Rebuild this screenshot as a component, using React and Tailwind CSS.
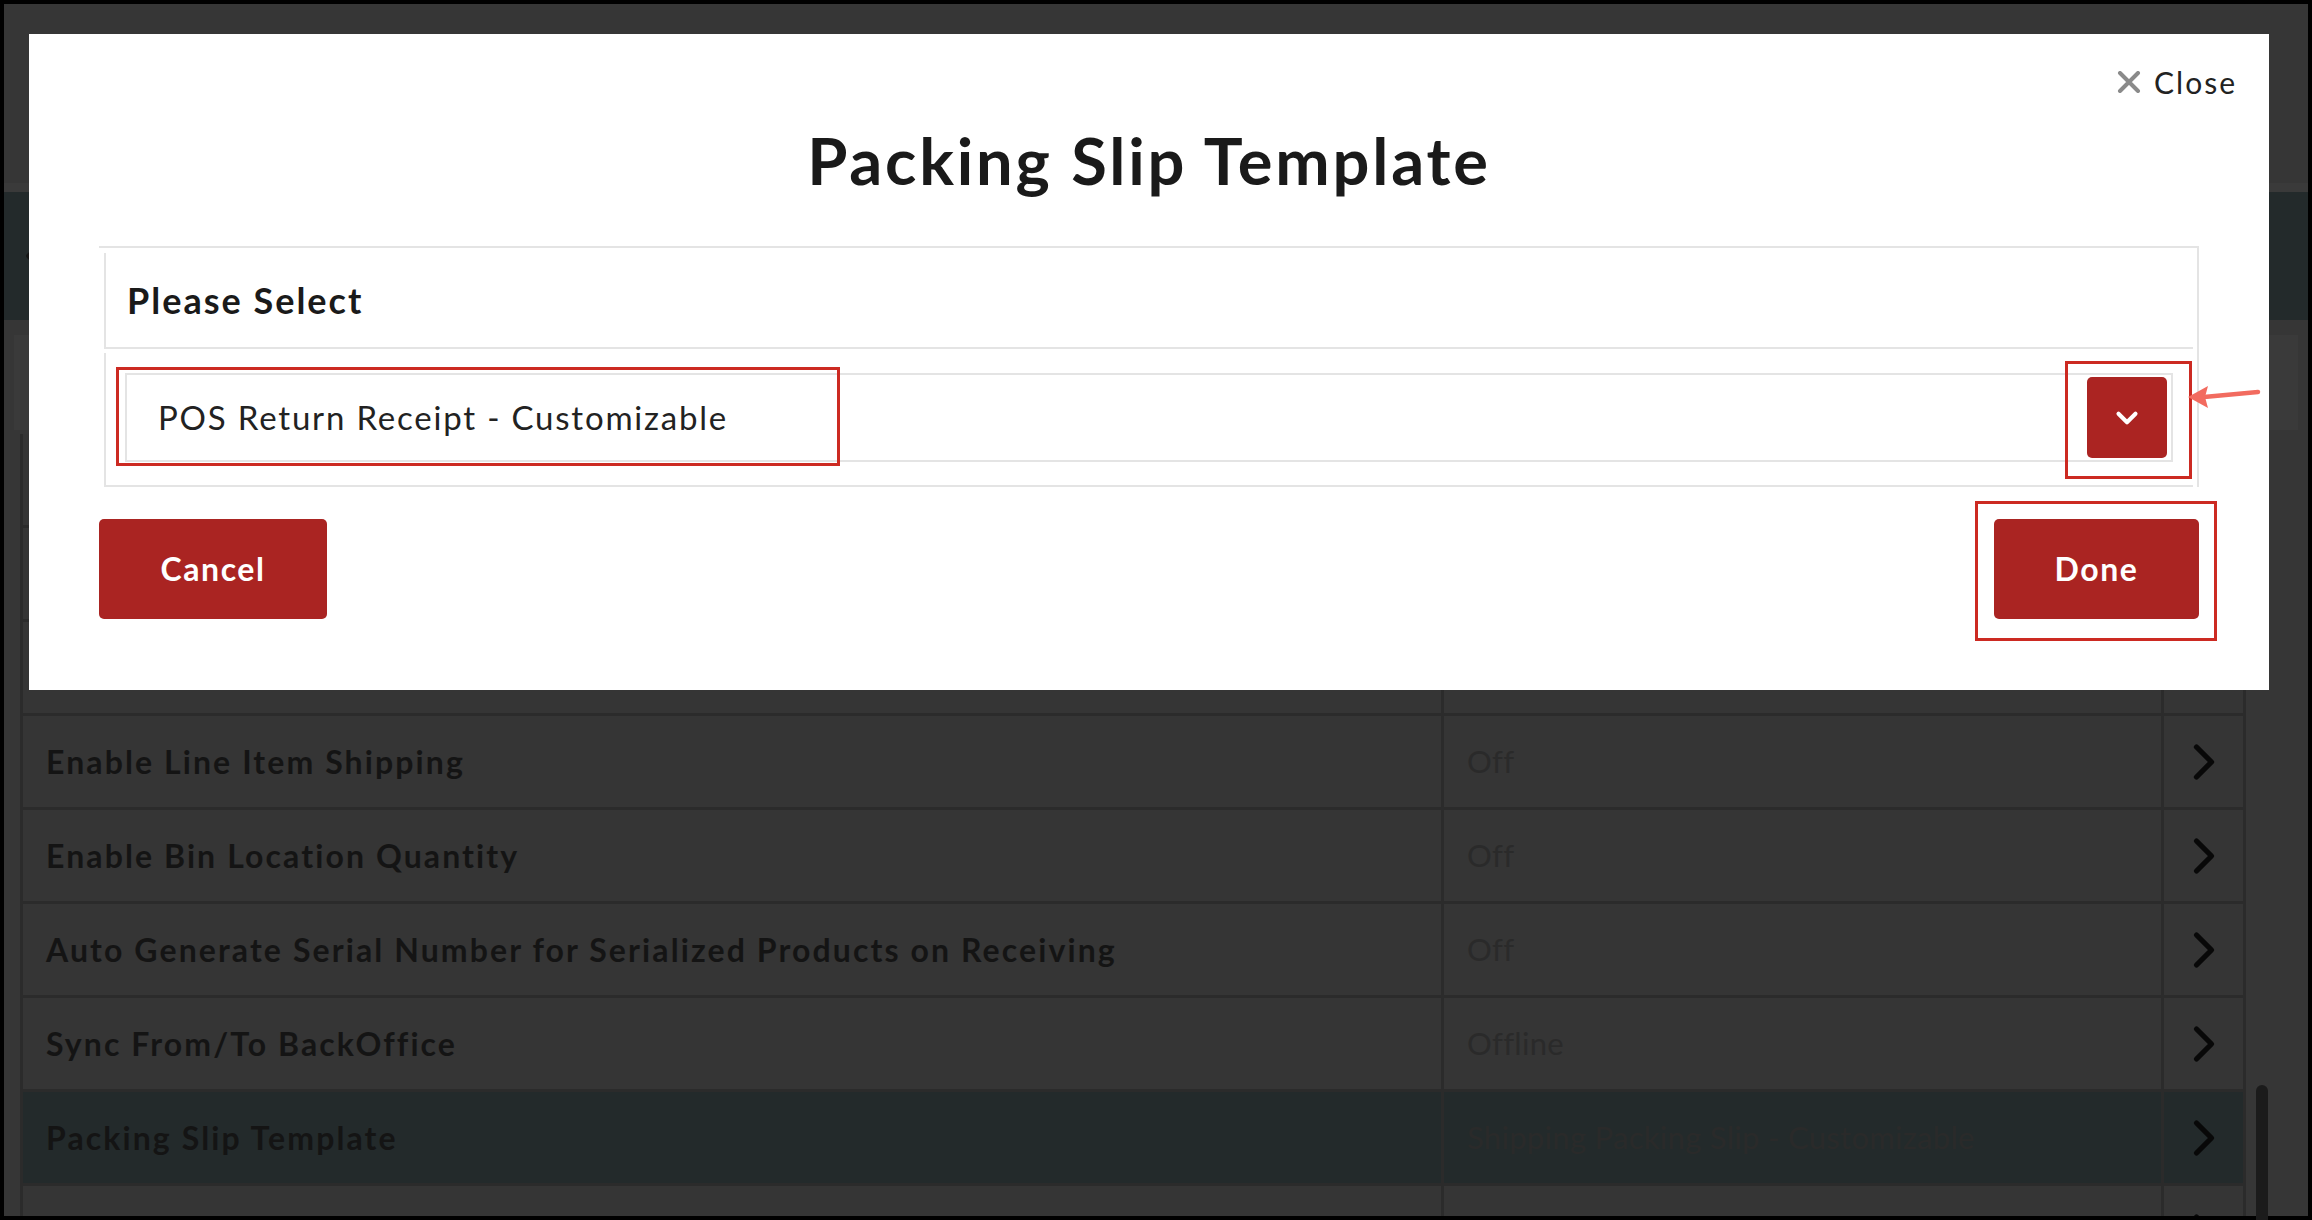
import React from 'react';
import { ChevronRight, ChevronDown, ChevronLeft } from 'lucide-react';

const rows = [
  { label: '', value: '' },
  { label: '', value: '' },
  { label: '', value: '' },
  { label: 'Enable Line Item Shipping', value: 'Off' },
  { label: 'Enable Bin Location Quantity', value: 'Off' },
  { label: 'Auto Generate Serial Number for Serialized Products on Receiving', value: 'Off' },
  { label: 'Sync From/To BackOffice', value: 'Offline' },
  { label: 'Packing Slip Template', value: 'Shipping Packing Slip - Customizable', active: true },
  { label: '', value: '' },
];

function SettingRow({ label, value, active }) {
  const cell = active ? 'bg-[#232a2b]' : 'bg-[#353535]';
  return (
    <div className="grid grid-cols-[1418px_717px_79px] gap-x-[3px] h-[91px] shrink-0">
      <div className={`${cell} flex items-center pl-[23px] text-[32px] font-bold tracking-[2.1px] text-[#141414]`}>
        {label}
      </div>
      <div className={`${cell} flex items-center pl-[23px] text-[31px] tracking-[0.3px] text-[#2a2a2a]`}>
        {value}
      </div>
      <div className={`${cell} flex items-center justify-center text-[#080808]`}>
        <ChevronRight size={60} strokeWidth={2.1} />
      </div>
    </div>
  );
}

export default function App() {
  return (
    <div className="relative w-[2312px] h-[1220px] overflow-hidden bg-black p-[4px] font-['Lato',sans-serif]">
      {/* page behind the overlay */}
      <div className="flex flex-col h-full bg-[#363636]">
        <div className="h-[179px] shrink-0" />
        <div className="h-[9px] shrink-0 bg-[#3a3a3a]" />
        <div className="h-[128px] shrink-0 bg-[#232a2b] flex items-center pl-[14px] text-[#151515]">
          <ChevronLeft size={28} strokeWidth={4} />
        </div>
        <div className="h-[15px] shrink-0" />
        <div className="h-[95px] shrink-0 mx-[10px] bg-[#3a3a3a]" />
        <div className="h-[4px] shrink-0" />

        <div className="flex flex-col gap-y-[3px] ml-[16px] w-[2226px] px-[3px] bg-[#2b2b2b] overflow-hidden grow">
          {rows.map((r, i) => (
            <SettingRow key={i} {...r} />
          ))}
        </div>
      </div>

      {/* scrollbar thumb */}
      <div className="absolute left-[2256px] top-[1085px] w-[12px] h-[140px] rounded-full bg-[#1b1b1b]" />

      {/* Modal */}
      <div className="absolute left-[29px] top-[34px] w-[2240px] h-[656px] bg-white flex flex-col px-[70px]">
        <div className="flex justify-end items-center pt-[34px] -mr-[38px] h-[62px] text-[30px] leading-none tracking-[2px] text-[#222]">
          <svg width="24" height="22" viewBox="0 0 24 22" className="mr-[13px]">
            <path d="M3 2 L21 20 M21 2 L3 20" stroke="#8a8a8a" strokeWidth="4" strokeLinecap="round" />
          </svg>
          <span>Close</span>
        </div>

        <h1 className="mt-[32px] text-center text-[65px] leading-none font-bold tracking-[2.8px] text-[#1a1a1a]">
          Packing Slip Template
        </h1>

        {/* select panel */}
        <div className="mt-[53px] border-t-2 border-r-2 border-[#e4e4e4] pl-[5px] pt-[5px] pr-[4px]">
          <div className="h-[96px] border-l-2 border-b-2 border-[#e4e4e4] flex items-center pl-[21px] text-[36px] font-bold tracking-[2px] text-[#1a1a1a]">
            Please Select
          </div>
          <div className="mt-[4px] h-[134px] border-l-2 border-b-2 border-[#e4e4e4] flex items-start pt-[20px] pl-[19px] pr-[20px]">
            <div className="w-full h-[89px] border-2 border-[#e4e4e4] flex items-center justify-between pl-[31px] pr-[4px]">
              <span className="text-[33px] tracking-[1.8px] text-[#222]">POS Return Receipt - Customizable</span>
              <button className="w-[80px] h-[81px] rounded-[5px] bg-[#ab2422] flex items-center justify-center text-white">
                <ChevronDown size={34} strokeWidth={2.9} />
              </button>
            </div>
          </div>
        </div>

        <div className="mt-[32px] flex justify-between items-start">
          <button className="w-[228px] h-[100px] rounded-[5px] bg-[#aa2422] text-white text-[32px] font-bold tracking-[1.6px]">
            Cancel
          </button>
          <button className="w-[205px] h-[100px] rounded-[5px] bg-[#aa2422] text-white text-[32px] font-bold tracking-[1.6px]">
            Done
          </button>
        </div>

        {/* annotation boxes */}
        <div className="absolute left-[87px] top-[333px] w-[724px] h-[99px] border-[3px] border-[#cc2a22]" />
        <div className="absolute left-[2036px] top-[327px] w-[127px] h-[118px] border-[3px] border-[#cc2a22]" />
        <div className="absolute left-[1946px] top-[467px] w-[242px] h-[140px] border-[3px] border-[#cc2a22]" />
        <svg className="absolute left-[2157px] top-[346px]" width="76" height="30" viewBox="0 0 76 30">
          <path d="M72 12 L18 17" stroke="#f26b5f" strokeWidth="4.5" strokeLinecap="round" />
          <path d="M2 17 L22 6 L19 17 L22 28 Z" fill="#f26b5f" />
        </svg>
      </div>
    </div>
  );
}
